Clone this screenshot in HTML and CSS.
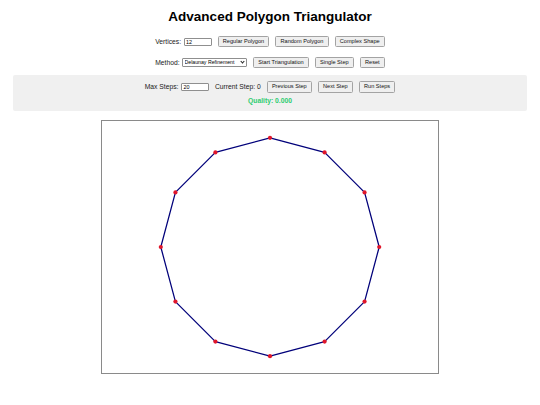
FILE: index.html
```html
<!DOCTYPE html>
<html lang="en">
<head>
<meta charset="utf-8">
<title>Advanced Polygon Triangulator</title>
<link rel="stylesheet" href="styles.css">
</head>
<body>
<h1 class="title">Advanced Polygon Triangulator</h1>
<div class="controls">
  <div class="row">
    <label class="group"><span class="lbl">Vertices:</span><input class="field" type="number" value="12"></label>
    <button class="btn">Regular Polygon</button>
    <button class="btn">Random Polygon</button>
    <button class="btn">Complex Shape</button>
  </div>
  <div class="row">
    <label class="group"><span class="lbl">Method:</span>
      <span class="picker-wrap">
        <select class="picker">
          <option>Delaunay Refinement</option>
          <option>Ear Clipping</option>
          <option>Monotone</option>
        </select>
      </span>
    </label>
    <button class="btn">Start Triangulation</button>
    <button class="btn">Single Step</button>
    <button class="btn">Reset</button>
  </div>
</div>
<div class="panel">
  <div class="row row-panel">
    <label class="group"><span class="lbl">Max Steps:</span><input class="field" type="number" value="20"></label>
    <span class="lbl">Current Step: 0</span>
    <button class="btn">Previous Step</button>
    <button class="btn">Next Step</button>
    <button class="btn">Run Steps</button>
  </div>
  <div class="quality">Quality: 0.000</div>
</div>
<div class="stage">
  <svg class="canvas" viewBox="0 0 800 600" width="336" height="252">
    <polygon class="edge" points="660,300 625.17,430 530,525.17 400,560 270,525.17 174.83,430 140,300 174.83,170 270,74.83 400,40 530,74.83 625.17,170"/>
    <g class="dots">
      <circle cx="660" cy="300" r="5"/>
      <circle cx="625.17" cy="430" r="5"/>
      <circle cx="530" cy="525.17" r="5"/>
      <circle cx="400" cy="560" r="5"/>
      <circle cx="270" cy="525.17" r="5"/>
      <circle cx="174.83" cy="430" r="5"/>
      <circle cx="140" cy="300" r="5"/>
      <circle cx="174.83" cy="170" r="5"/>
      <circle cx="270" cy="74.83" r="5"/>
      <circle cx="400" cy="40" r="5"/>
      <circle cx="530" cy="74.83" r="5"/>
      <circle cx="625.17" cy="170" r="5"/>
    </g>
  </svg>
</div>
</body>
</html>
```
FILE: styles.css
```css
html, body {
  margin: 0;
  padding: 0;
  background: #ffffff;
}
body {
  font-family: "Liberation Sans", Arial, sans-serif;
  color: #111;
}
.title {
  margin: 9px 0 0;
  font-size: 13.5px;
  line-height: 15.5px;
  font-weight: bold;
  text-align: center;
  color: #000;
}
.controls {
  margin-top: 11.5px;
  display: flex;
  flex-direction: column;
  gap: 10px;
}
.row {
  display: flex;
  justify-content: center;
  align-items: center;
  gap: 6px;
  height: 11px;
}
.group {
  display: flex;
  align-items: center;
  gap: 2.5px;
}
.lbl {
  font-size: 6.75px;
  line-height: 8px;
  color: #1a1a1a;
  white-space: nowrap;
}
.field {
  box-sizing: border-box;
  width: 28px;
  height: 8px;
  margin: 0;
  padding: 0 1.5px;
  border: 1px solid #8f8f8f;
  border-radius: 1px;
  font-family: "Liberation Sans", Arial, sans-serif;
  font-size: 5.4px;
  color: #000;
  background: #fff;
  appearance: textfield;
  -moz-appearance: textfield;
}
.field::-webkit-inner-spin-button,
.field::-webkit-outer-spin-button {
  -webkit-appearance: none;
  margin: 0;
}
.picker-wrap {
  position: relative;
  display: block;
  width: 65px;
  height: 9px;
}
.picker-wrap::after {
  content: "";
  position: absolute;
  right: 3px;
  top: 2.3px;
  width: 2px;
  height: 2px;
  border-right: 0.9px solid #222;
  border-bottom: 0.9px solid #222;
  transform: rotate(45deg);
  pointer-events: none;
}
.picker {
  box-sizing: border-box;
  display: block;
  width: 65px;
  height: 9px;
  margin: 0;
  padding: 0 7px 0 1.5px;
  border: 1px solid #8f8f8f;
  border-radius: 1px;
  font-family: "Liberation Sans", Arial, sans-serif;
  font-size: 5.2px;
  line-height: 7px;
  color: #000;
  background: #fff;
  appearance: none;
  -webkit-appearance: none;
}
.btn {
  box-sizing: border-box;
  height: 11px;
  margin: 0;
  padding: 0 4.2px;
  border: 1px solid #a3a3a3;
  border-radius: 1.5px;
  background: #efefef;
  font-family: "Liberation Sans", Arial, sans-serif;
  font-size: 5.6px;
  line-height: 1;
  color: #111;
  white-space: nowrap;
}
.panel {
  margin: 7px 13px 0;
  padding: 6px 0;
  background: #f0f0f0;
  border-radius: 2px;
}
.row-panel {
  height: 12px;
  gap: 6px;
}
.row-panel .btn {
  height: 12px;
}
.quality {
  margin-top: 4px;
  font-size: 6.75px;
  line-height: 8px;
  font-weight: bold;
  text-align: center;
  color: #2ecc71;
}
.stage {
  display: flex;
  justify-content: center;
  margin-top: 9px;
}
.canvas {
  display: block;
  border: 1px solid #8a8a8a;
  background: #fff;
}
.edge {
  fill: none;
  stroke: #00007a;
  stroke-width: 3;
  stroke-linejoin: round;
}
.dots circle {
  fill: #e0162b;
}
```
